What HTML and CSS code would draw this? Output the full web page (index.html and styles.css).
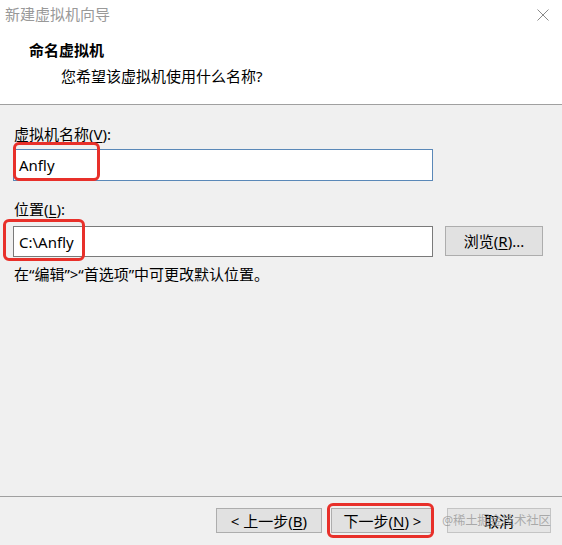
FILE: index.html
```html
<!DOCTYPE html>
<html lang="zh-CN">
<head>
<meta charset="utf-8">
<title>新建虚拟机向导</title>
<link rel="stylesheet" href="styles.css">
</head>
<body>
<div class="dialog">
  <div class="titlebar">
    <span class="title">新建虚拟机向导</span>
    <svg class="close" width="12" height="12" viewBox="0 0 12 12"><path d="M0.5 0.5 L11.5 11.5 M11.5 0.5 L0.5 11.5" stroke="#8a8a8a" stroke-width="1" fill="none"/></svg>
  </div>
  <div class="header">
    <div class="h-title">命名虚拟机</div>
    <div class="h-sub">您希望该虚拟机使用什么名称?</div>
  </div>
  <div class="content">
    <div class="label">虚拟机名称(<u>V</u>):</div>
    <div class="field-row">
      <div class="input focused">Anfly</div>
      <div class="mark mark-name"></div>
    </div>
    <div class="label label2">位置(<u>L</u>):</div>
    <div class="field-row">
      <div class="input">C:\Anfly</div>
      <div class="btn browse">浏览(<u>R</u>)...</div>
      <div class="mark mark-loc"></div>
    </div>
    <div class="help">在“编辑”&gt;“首选项”中可更改默认位置。</div>
  </div>
  <div class="footer">
    <div class="btn nav back">&lt; 上一步(<u>B</u>)</div>
    <div class="btn nav next">下一步(<u>N</u>) &gt;<div class="mark mark-next"></div></div>
    <div class="btn nav cancel">取消<span class="watermark">@稀土掘金技术社区</span></div>
  </div>
</div>
</body>
</html>
```
FILE: styles.css
```css
* { box-sizing: border-box; }
html, body { margin: 0; padding: 0; }
body {
  width: 562px;
  height: 545px;
  overflow: hidden;
  font-family: "Noto Sans", "Noto Sans CJK SC", sans-serif;
  font-size: 15px;
  color: #000;
  background: #f0f0f0;
}
.dialog {
  width: 562px;
  height: 545px;
  display: flex;
  flex-direction: column;
}
.titlebar {
  height: 30px;
  background: #fff;
  display: flex;
  align-items: center;
  justify-content: space-between;
  padding: 0 13px 2px 5px;
}
.title {
  color: #999;
  font-size: 15px;
  line-height: 20px;
}
.close { display: block; margin-top: 2px; }
.header {
  height: 75px;
  background: #fff;
  border-bottom: 1px solid #a0a0a0;
  padding: 10px 0 0 29px;
}
.h-title {
  font-weight: bold;
  line-height: 20px;
  font-size: 15px;
}
.h-sub {
  margin-left: 32px;
  margin-top: 6px;
  line-height: 20px;
}
.content {
  flex: 1;
  padding: 19px 0 0 14px;
  border-bottom: 1px solid #a0a0a0;
}
.label { line-height: 20px; margin-bottom: 5px; }
.label2 { margin-top: 18px; margin-bottom: 7px; }
.field-row {
  position: relative;
  display: flex;
  gap: 12px;
}
.input {
  width: 420px;
  height: 32px;
  background: #fff;
  border: 1px solid #7a7a7a;
  padding: 0 5px;
  display: flex;
  align-items: center;
  line-height: 20px;
  margin-left: -1px;
}
.input.focused { border-color: #5a88b8; }
.field-row + .label2 + .field-row .input { height: 31px; }
.btn {
  background: #e1e1e1;
  border: 1px solid #adadad;
  display: flex;
  align-items: center;
  justify-content: center;
  line-height: 20px;
}
.browse { width: 98px; height: 30px; }
.help { margin-top: 7px; line-height: 20px; }
.mark {
  position: absolute;
  border: 3px solid #e8302a;
  border-radius: 6px;
  pointer-events: none;
}
.mark-name { left: -1px; top: -7px; width: 87px; height: 39px; }
.mark-loc { left: -11px; top: -7px; width: 82px; height: 42px; }
.footer {
  height: 48px;
  display: flex;
  justify-content: flex-end;
  padding: 11px 11px 0 0;
  gap: 9px;
}
.nav { width: 106px; height: 25px; position: relative; }
.next { width: 103px; margin-right: 4px; }
.cancel { width: 104px; background: #e5e5e5; border-color: #c4c4c4; }
.mark-next { left: -5px; top: -6px; width: 107px; height: 35px; }
.watermark {
  position: absolute;
  left: -6px;
  top: 3px;
  font-size: 12.5px;
  line-height: 18px;
  color: rgba(150, 150, 150, 0.75);
  white-space: nowrap;
  letter-spacing: -0.3px;
}
u { text-decoration-thickness: 1px; text-underline-offset: 2px; }
```
